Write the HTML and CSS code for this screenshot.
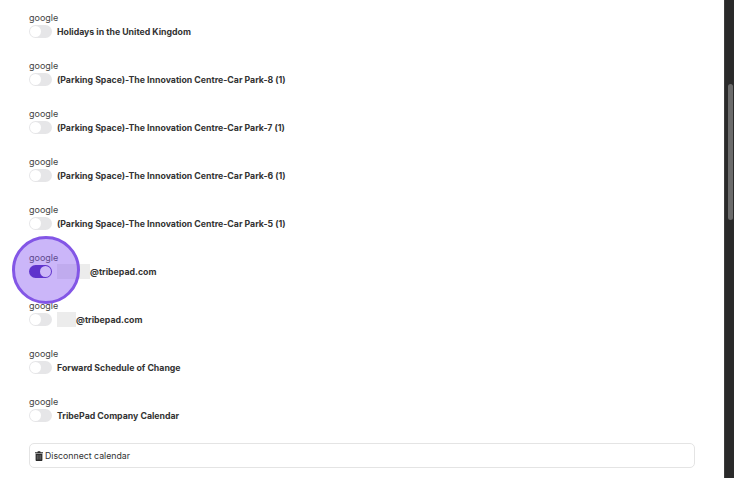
FILE: index.html
```html
<!doctype html>
<html>
  <head>
    <title>Calendars</title>
    <meta charset="utf-8" />
    <link rel="stylesheet" href="styles.css">
  </head>
  <body>
    <div class="page">
      <div class="content">
        <div class="calendar">
          <div class="provider">google</div>
          <div class="row"><span class="toggle"></span><span class="name">Holidays in the United Kingdom</span></div>
        </div>
        <div class="calendar">
          <div class="provider">google</div>
          <div class="row"><span class="toggle"></span><span class="name">(Parking Space)-The Innovation Centre-Car Park-8 (1)</span></div>
        </div>
        <div class="calendar">
          <div class="provider">google</div>
          <div class="row"><span class="toggle"></span><span class="name">(Parking Space)-The Innovation Centre-Car Park-7 (1)</span></div>
        </div>
        <div class="calendar">
          <div class="provider">google</div>
          <div class="row"><span class="toggle"></span><span class="name">(Parking Space)-The Innovation Centre-Car Park-6 (1)</span></div>
        </div>
        <div class="calendar">
          <div class="provider">google</div>
          <div class="row"><span class="toggle"></span><span class="name">(Parking Space)-The Innovation Centre-Car Park-5 (1)</span></div>
        </div>
        <div class="calendar">
          <div class="provider">google</div>
          <div class="row"><span class="toggle on"></span><span class="redact long"></span><span class="name">@tribepad.com</span></div>
        </div>
        <div class="calendar">
          <div class="provider">google</div>
          <div class="row"><span class="toggle"></span><span class="redact"></span><span class="name">@tribepad.com</span></div>
        </div>
        <div class="calendar">
          <div class="provider">google</div>
          <div class="row"><span class="toggle"></span><span class="name">Forward Schedule of Change</span></div>
        </div>
        <div class="calendar">
          <div class="provider">google</div>
          <div class="row"><span class="toggle"></span><span class="name">TribePad Company Calendar</span></div>
        </div>
        <button class="disconnect">
          <svg class="trash" viewBox="0 0 8 10" width="8" height="10"><path d="M0 1.2h2.4L2.8.3h2.4l.4.9H8v1H0zM.6 2.8h6.8V9c0 .6-.4 1-1 1H1.6c-.6 0-1-.4-1-1z" fill="#2b2b2b"/><path d="M2.3 4v4.6M4 4v4.6M5.7 4v4.6" stroke="#8a8a8a" stroke-width=".6"/></svg>
          Disconnect calendar
        </button>
      </div>
      <div class="scrollbar"><div class="thumb"></div></div>
    </div>
    <div class="highlight"></div>
  </body>
</html>
```

FILE: styles.css
```css
* {
	padding:0;
	margin:0;
	box-sizing:border-box;
}

body {
	width:734px;
	height:478px;
	overflow:hidden;
	background-color:#fff;
	font-family:Inter, "Liberation Sans", sans-serif;
	color:#2b2b2b;
}

.page {
	display:flex;
	height:478px;
}

.content {
	flex:1;
	padding:12px 29px 0 29px;
}

.calendar {
	height:48px;
}

.provider {
	font-size:9px;
	line-height:12px;
	color:#444;
}

.row {
	display:flex;
	align-items:center;
	height:13px;
	margin-top:1px;
}

.toggle {
	position:relative;
	width:23px;
	height:13px;
	margin-right:5px;
	background-color:#e6e6e8;
	border-radius:7px;
	flex:none;
}

.toggle::after {
	content:"";
	position:absolute;
	left:1px;
	top:1px;
	width:11px;
	height:11px;
	background-color:#fff;
	border-radius:50%;
}

/* sits above the highlight ring, it stays dark in the reference */
.toggle.on {
	z-index:1;
	background-color:#5f33cc;
}

.toggle.on::after {
	left:11px;
	background-color:#cdb8f8;
}

.name {
	font-size:8.75px;
	font-weight:700;
	color:#333;
}

.redact {
	width:19px;
	height:15px;
	background-color:#ececec;
	flex:none;
}

.redact.long {
	width:33px;
}

.disconnect {
	display:flex;
	align-items:center;
	gap:2px;
	width:666px;
	height:25px;
	margin-top:-1px;
	padding-left:5px;
	background-color:#fff;
	border:1px solid #e4e4e4;
	border-radius:5px;
	font-family:inherit;
	font-size:8.75px;
	color:#333;
}

.scrollbar {
	width:10px;
	padding:84px 2px 0 3px;
	background-color:#2a2a2a;
	border-left:1px solid #3d3d3d;
	flex:none;
}

.thumb {
	width:5px;
	height:136px;
	background-color:#6b6b6b;
	border-radius:3px;
}

.highlight {
	position:absolute;
	left:12px;
	top:236px;
	width:68px;
	height:68px;
	background-color:rgba(130,80,240,0.42);
	border:3px solid #8356e6;
	border-radius:50%;
}
```
